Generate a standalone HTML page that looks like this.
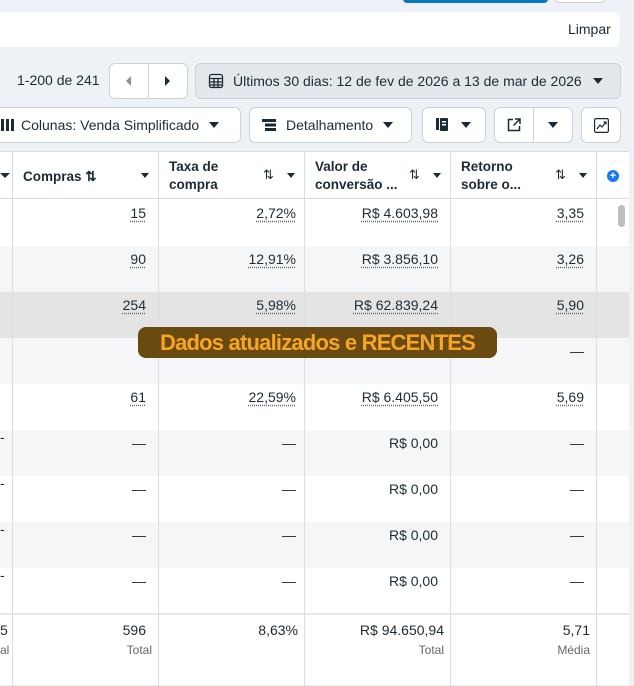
<!DOCTYPE html>
<html><head><meta charset="utf-8"><style>
*{box-sizing:border-box;margin:0;padding:0}
body{width:634px;height:685px;overflow:hidden;background:#eef1f5;font-family:"Liberation Sans",sans-serif;color:#1c2b33;position:relative;font-size:14px}
.abs{position:absolute}
.btn{position:absolute;background:#fff;border:1px solid #cbd2d9;border-radius:6px;display:flex;align-items:center;font-size:14px}
.tri{display:inline-block;width:0;height:0;border-left:5px solid transparent;border-right:5px solid transparent;border-top:6px solid #1c2b33}
.table{position:absolute;left:0;top:151px;width:629px;height:534px;background:#fff;border-top:1px solid #dadde1}
.row{position:absolute;left:0;width:629px;height:46px}
.vl{position:absolute;top:0;width:1px;height:534px;background:#dadde1}
.c{position:absolute;text-align:right;font-size:14px}
.u{text-decoration:underline dotted #65676b;text-underline-offset:3px}
.h{position:absolute;font-size:13.5px;font-weight:bold;line-height:18px}
.sm{font-size:12px;color:#65676b}
</style></head><body>
<div class="abs" style="left:403px;top:-6px;width:145px;height:9px;background:#0a78be;border-radius:4px"></div>
<div class="abs" style="left:555px;top:-6px;width:50px;height:9px;background:#fff;border:1px solid #cbd2d9;border-radius:4px"></div>
<div class="abs" style="left:0;top:12px;width:620px;height:35px;background:#fff;border-radius:0 6px 6px 0"></div>
<div class="abs" style="left:568px;top:21px;font-size:14px">Limpar</div>
<div class="abs" style="left:17px;top:72px;font-size:14px">1-200 de 241</div>
<div class="btn" style="left:109px;top:63px;width:79px;height:36px;padding:0">
 <div style="width:39px;height:34px;border-right:1px solid #cbd2d9;display:flex;align-items:center;justify-content:center"><span style="border-top:5px solid transparent;border-bottom:5px solid transparent;border-right:5px solid #8a9199"></span></div>
 <div style="width:39px;display:flex;justify-content:center"><span style="border-top:5px solid transparent;border-bottom:5px solid transparent;border-left:5px solid #1c2b33"></span></div>
</div>
<div class="btn" style="left:195px;top:63px;width:426px;height:36px;background:#e4e8ed;padding-left:12px">
 <svg width="16" height="16" viewBox="0 0 16 16" fill="none" stroke="#1c2b33" stroke-width="1.3"><rect x="1.5" y="1.5" width="13" height="13" rx="2"/><path d="M1.5 5.5h13M1.5 9h13M1.5 12h13M6 5.5v9M10 5.5v9"/></svg>
 <span style="margin-left:9px">Últimos 30 dias: 12 de fev de 2026 a 13 de mar de 2026</span>
 <span class="tri" style="margin-left:11px"></span>
</div>
<div class="btn" style="left:-8px;top:107px;width:249px;height:36px;padding-left:8px">
 <span style="display:inline-flex;gap:2px"><i style="width:3px;height:12px;background:#1c2b33"></i><i style="width:3px;height:12px;background:#1c2b33"></i><i style="width:3px;height:12px;background:#1c2b33"></i></span>
 <span style="margin-left:7px">Colunas: Venda Simplificado</span><span class="tri" style="margin-left:10px"></span>
</div>
<div class="btn" style="left:249px;top:107px;width:163px;height:36px;padding-left:12px">
 <svg width="14" height="14" viewBox="0 0 14 14" fill="#1c2b33"><rect x="0" y="1" width="14" height="3"/><rect x="3" y="5.5" width="11" height="3"/><rect x="3" y="10" width="11" height="3"/></svg>
 <span style="margin-left:10px">Detalhamento</span><span class="tri" style="margin-left:10px"></span>
</div>
<div class="btn" style="left:422px;top:107px;width:64px;height:36px;padding-left:12px">
 <svg width="16" height="16" viewBox="0 0 16 16" fill="#1c2b33"><rect x="1" y="1" width="3" height="12"/><rect x="5" y="1" width="8" height="13" rx="1"/><rect x="7" y="4" width="4" height="1.5" fill="#fff"/><rect x="7" y="7" width="4" height="1.5" fill="#fff"/></svg>
 <span class="tri" style="margin-left:10px"></span>
</div>
<div class="btn" style="left:494px;top:107px;width:79px;height:36px">
 <div style="width:39px;height:34px;border-right:1px solid #cbd2d9;display:flex;align-items:center;justify-content:center"><svg width="14" height="14" viewBox="0 0 14 14" fill="none" stroke="#1c2b33" stroke-width="1.5"><path d="M6 1.5H1.5v11h11V8M8 1h5v5M13 1L6.5 7.5"/></svg></div>
 <div style="width:39px;display:flex;justify-content:center"><span class="tri"></span></div>
</div>
<div class="btn" style="left:581px;top:107px;width:40px;height:36px;justify-content:center">
 <svg width="15" height="15" viewBox="0 0 15 15" fill="none" stroke="#1c2b33" stroke-width="1.2"><rect x="0.6" y="0.6" width="13.8" height="13.8" rx="1.5"/><path d="M3 11l3-4 2 2 4-5M9.5 4H12v2.5"/></svg>
</div>
<div class="table">
 <div class="row" style="top:0;height:47px;border-bottom:1px solid #dadde1"></div>
 <div class="row" style="top:94px;background:#f5f6f7"></div>
 <div class="row" style="top:140px;background:#e4e4e4"></div>
 <div class="row" style="top:186px;background:#f5f6f7"></div>
 <div class="row" style="top:278px;background:#f5f6f7"></div>
 <div class="row" style="top:370px;background:#f5f6f7"></div>
 <div class="row" style="top:461px;height:2px;background:#e4e6e9"></div>
 <div class="vl" style="left:12px"></div><div class="vl" style="left:158px"></div><div class="vl" style="left:304px"></div><div class="vl" style="left:450px"></div><div class="vl" style="left:596px"></div>
 <span class="tri abs" style="left:0;top:21px;border-top-width:5px"></span>
 <div class="h" style="left:23px;top:16px">Compras ⇅</div><span class="tri abs" style="left:141px;top:21px;border-top-width:5px;border-left-width:4px;border-right-width:4px"></span>
 <div class="h" style="left:169px;top:6px">Taxa de<br>compra</div><div class="abs" style="left:263px;top:15px;font-size:13px">⇅</div><span class="tri abs" style="left:287px;top:21px;border-top-width:5px;border-left-width:4px;border-right-width:4px"></span>
 <div class="h" style="left:315px;top:6px">Valor de<br>conversão ...</div><div class="abs" style="left:409px;top:15px;font-size:13px">⇅</div><span class="tri abs" style="left:433px;top:21px;border-top-width:5px;border-left-width:4px;border-right-width:4px"></span>
 <div class="h" style="left:461px;top:6px">Retorno<br>sobre o...</div><div class="abs" style="left:555px;top:15px;font-size:13px">⇅</div><span class="tri abs" style="left:579px;top:21px;border-top-width:5px;border-left-width:4px;border-right-width:4px"></span>
 <div class="abs" style="left:607px;top:18px;width:12px;height:12px;border-radius:50%;background:#1877f2;color:#fff;font-size:11px;line-height:12px;text-align:center;font-weight:bold">+</div>
 <div class="abs" style="left:618px;top:53px;width:7px;height:22px;border-radius:4px;background:#bcc0c4"></div>
</div>
<div id="cells"></div>
<div class="abs" style="left:138px;top:327px;width:359px;height:31px;background:#6b4a12;border-radius:8px;color:#f6a623;font-size:22px;font-weight:bold;line-height:31px;text-align:center;font-family:'Liberation Sans',sans-serif;letter-spacing:-0.8px">Dados atualizados e RECENTES</div>
<script>
var rows=[["15","2,72%","R$ 4.603,98","3,35",1],["90","12,91%","R$ 3.856,10","3,26",1],["254","5,98%","R$ 62.839,24","5,90",1],["","","","—",0],["61","22,59%","R$ 6.405,50","5,69",1],["—","—","R$ 0,00","—",0],["—","—","R$ 0,00","—",0],["—","—","R$ 0,00","—",0],["—","—","R$ 0,00","—",0]];
var rights=[146,296,438,584],h="";
rows.forEach(function(r,i){var y=205+i*46;for(var j=0;j<4;j++){if(r[j])h+='<div class="c'+(r[4]?' u':'')+'" style="right:'+(634-rights[j])+'px;top:'+y+'px">'+r[j]+'</div>';}
if(i>=5)h+='<div class="abs" style="left:0;top:'+(y-6)+'px;font-size:14px">-</div>';});
h+='<div class="c" style="right:488px;top:622px">596</div><div class="c sm" style="right:482px;top:643px">Total</div>';
h+='<div class="c" style="right:336px;top:622px">8,63%</div>';
h+='<div class="c" style="right:190px;top:622px">R$ 94.650,94</div><div class="c sm" style="right:190px;top:643px">Total</div>';
h+='<div class="c" style="right:44px;top:622px">5,71</div><div class="c sm" style="right:44px;top:643px">Média</div>';
h+='<div class="abs" style="left:0;top:622px">5</div><div class="abs sm" style="left:0;top:643px">al</div>';
document.getElementById("cells").innerHTML=h;
</script>
</body></html>
